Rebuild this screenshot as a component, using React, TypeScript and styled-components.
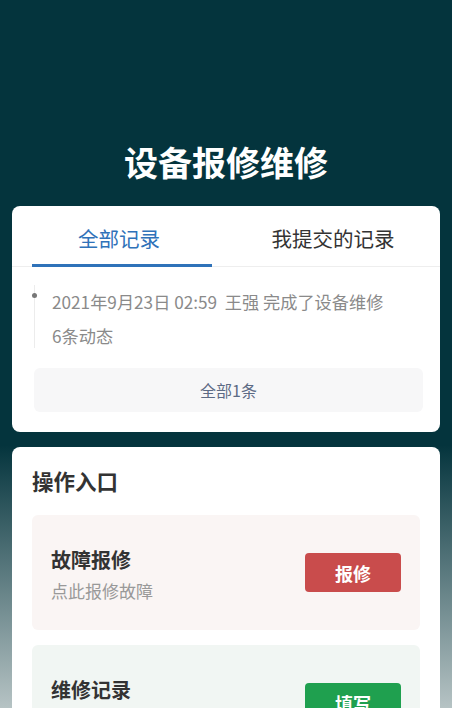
import React, { useState } from 'react';
import styled, { createGlobalStyle } from 'styled-components';

const GlobalStyle = createGlobalStyle`
  html, body {
    margin: 0;
    padding: 0;
  }
  body {
    min-height: 708px;
    background: linear-gradient(to bottom, #04343d 0, #04343d 445px, #b6c3c4 708px);
    font-family: "Noto Sans CJK SC", "Noto Sans", sans-serif;
  }
`;

const Page = styled.div`
  padding: 140px 12px 0;
`;

const Title = styled.h1`
  margin: 0 0 22px;
  height: 44px;
  line-height: 44px;
  text-align: center;
  color: #ffffff;
  font-size: 34px;
  font-weight: 700;
`;

const Card = styled.section`
  background: #ffffff;
  border-radius: 8px;
  overflow: hidden;
  margin-bottom: 15px;
`;

const Tabs = styled.div`
  display: flex;
  height: 60px;
  border-bottom: 1px solid #eeeeee;
`;

const Tab = styled.div<{ $active?: boolean }>`
  flex: 1;
  position: relative;
  display: flex;
  align-items: center;
  justify-content: center;
  margin-top: 3px;
  font-size: 20.5px;
  color: ${({ $active }) => ($active ? '#2f72b9' : '#333333')};
  cursor: pointer;

  &::after {
    content: '';
    display: ${({ $active }) => ($active ? 'block' : 'none')};
    position: absolute;
    left: 20px;
    right: 14px;
    bottom: -1px;
    height: 3px;
    background: #2f72b9;
  }
`;

const Timeline = styled.div`
  margin: 21px 0 0 22px;
  padding: 0 0 0 17px;
  height: 63px;
  border-left: 1px solid #ececec;
  position: relative;

  &::before {
    content: '';
    position: absolute;
    left: -3px;
    top: 8px;
    width: 5px;
    height: 5px;
    border-radius: 50%;
    background: #777777;
  }
`;

const TimelineLine = styled.div`
  font-size: 17.2px;
  line-height: 34px;
  color: #8a8a8a;
  white-space: nowrap;
  &:first-child {
    margin-top: -3px;
  }
`;

const AllButton = styled.button`
  display: block;
  width: calc(100% - 39px);
  margin: 20px 17px 20px 22px;
  height: 44px;
  border: none;
  border-radius: 6px;
  background: #f7f7f8;
  color: #5d6b85;
  font-family: inherit;
  font-size: 16px;
`;

const SectionTitle = styled.h2`
  margin: 0;
  padding: 19px 20px 0;
  font-size: 21.5px;
  line-height: 30px;
  font-weight: 700;
  color: #333333;
`;

const EntryList = styled.div`
  display: flex;
  flex-direction: column;
  gap: 15px;
  padding: 19px 20px 20px;
`;

const Entry = styled.div<{ $tone: 'red' | 'green' }>`
  display: flex;
  align-items: center;
  justify-content: space-between;
  height: 115px;
  padding: 0 19px;
  border-radius: 6px;
  background: ${({ $tone }) => ($tone === 'red' ? '#faf5f4' : '#f1f6f3')};
`;

const EntryText = styled.div`
  display: flex;
  flex-direction: column;
  padding-top: 5px;
`;

const EntryName = styled.div`
  font-size: 20px;
  font-weight: 700;
  line-height: 30px;
  color: #333333;
`;

const EntryDesc = styled.div`
  font-size: 17px;
  line-height: 31px;
  color: #999999;
`;

const ActionButton = styled.button<{ $tone: 'red' | 'green' }>`
  width: 96px;
  height: 39px;
  border: none;
  border-radius: 4px;
  background: ${({ $tone }) => ($tone === 'red' ? '#c94c4c' : '#1fa04f')};
  color: #ffffff;
  font-family: inherit;
  font-size: 18px;
  font-weight: 700;
`;

const entries = [
  { tone: 'red' as const, name: '故障报修', desc: '点此报修故障', action: '报修' },
  { tone: 'green' as const, name: '维修记录', desc: '填写维修记录', action: '填写' },
];

export default function App() {
  const [tab, setTab] = useState(0);

  return (
    <>
      <GlobalStyle />
      <Page>
        <Title>设备报修维修</Title>

        <Card>
          <Tabs>
            <Tab $active={tab === 0} onClick={() => setTab(0)}>全部记录</Tab>
            <Tab $active={tab === 1} onClick={() => setTab(1)}>我提交的记录</Tab>
          </Tabs>
          <Timeline>
            <TimelineLine>2021年9月23日 02:59&nbsp;&nbsp;王强 完成了设备维修</TimelineLine>
            <TimelineLine>6条动态</TimelineLine>
          </Timeline>
          <AllButton>全部1条</AllButton>
        </Card>

        <Card>
          <SectionTitle>操作入口</SectionTitle>
          <EntryList>
            {entries.map((e) => (
              <Entry key={e.name} $tone={e.tone}>
                <EntryText>
                  <EntryName>{e.name}</EntryName>
                  <EntryDesc>{e.desc}</EntryDesc>
                </EntryText>
                <ActionButton $tone={e.tone}>{e.action}</ActionButton>
              </Entry>
            ))}
          </EntryList>
        </Card>
      </Page>
    </>
  );
}
